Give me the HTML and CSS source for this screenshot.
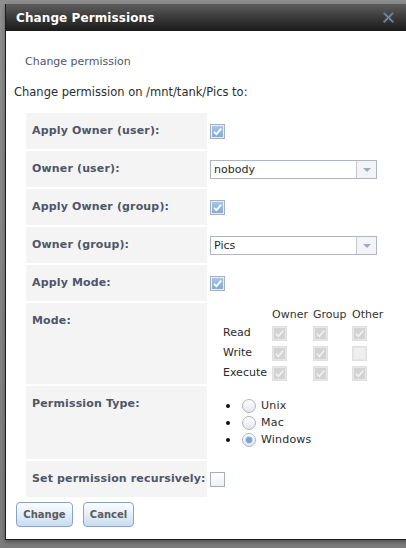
FILE: index.html
```html
<!DOCTYPE html>
<html>
<head>
<meta charset="utf-8">
<title>Change Permissions</title>
<link rel="stylesheet" href="styles.css">
</head>
<body>
<div class="dialog">
  <div class="titlebar">
    <span class="title">Change Permissions</span>
    <svg class="close" width="11" height="11" viewBox="0 0 11 11"><path d="M1.5 1.5 L9.5 9.5 M9.5 1.5 L1.5 9.5" stroke="#5f6f80" stroke-width="2.4" stroke-linecap="square"/><path d="M2 2 L9 9 M9 2 L2 9" stroke="#8797a8" stroke-width="0.9" stroke-linecap="square"/></svg>
  </div>
  <div class="content">
    <div class="tab">Change permission</div>
    <div class="intro">Change permission on /mnt/tank/Pics to:</div>
    <div class="form">
      <div class="label">Apply Owner (user):</div>
      <div class="value"><span class="cb on"><svg width="11" height="11" viewBox="0 0 11 11"><path d="M2 5.8 L4.4 8.2 L9.2 2.6" fill="none" stroke="#fff" stroke-width="1.8"/></svg></span></div>

      <div class="label">Owner (user):</div>
      <div class="value"><div class="select"><span class="sel-text">nobody</span><span class="sel-arrow"></span></div></div>

      <div class="label">Apply Owner (group):</div>
      <div class="value"><span class="cb on"><svg width="11" height="11" viewBox="0 0 11 11"><path d="M2 5.8 L4.4 8.2 L9.2 2.6" fill="none" stroke="#fff" stroke-width="1.8"/></svg></span></div>

      <div class="label">Owner (group):</div>
      <div class="value"><div class="select"><span class="sel-text">Pics</span><span class="sel-arrow"></span></div></div>

      <div class="label">Apply Mode:</div>
      <div class="value"><span class="cb on"><svg width="11" height="11" viewBox="0 0 11 11"><path d="M2 5.8 L4.4 8.2 L9.2 2.6" fill="none" stroke="#fff" stroke-width="1.8"/></svg></span></div>

      <div class="label">Mode:</div>
      <div class="value top">
        <div class="mode">
          <span></span><span class="mh">Owner</span><span class="mh">Group</span><span class="mh">Other</span>
          <span class="ml">Read</span>
          <span class="cell"><span class="cb dis on"><svg width="11" height="11" viewBox="0 0 11 11"><path d="M2 5.8 L4.4 8.2 L9.2 2.6" fill="none" stroke="#f2f2f2" stroke-width="1.6"/></svg></span></span>
          <span class="cell"><span class="cb dis on"><svg width="11" height="11" viewBox="0 0 11 11"><path d="M2 5.8 L4.4 8.2 L9.2 2.6" fill="none" stroke="#f2f2f2" stroke-width="1.6"/></svg></span></span>
          <span class="cell"><span class="cb dis on"><svg width="11" height="11" viewBox="0 0 11 11"><path d="M2 5.8 L4.4 8.2 L9.2 2.6" fill="none" stroke="#f2f2f2" stroke-width="1.6"/></svg></span></span>
          <span class="ml">Write</span>
          <span class="cell"><span class="cb dis on"><svg width="11" height="11" viewBox="0 0 11 11"><path d="M2 5.8 L4.4 8.2 L9.2 2.6" fill="none" stroke="#f2f2f2" stroke-width="1.6"/></svg></span></span>
          <span class="cell"><span class="cb dis on"><svg width="11" height="11" viewBox="0 0 11 11"><path d="M2 5.8 L4.4 8.2 L9.2 2.6" fill="none" stroke="#f2f2f2" stroke-width="1.6"/></svg></span></span>
          <span class="cell"><span class="cb dis off"></span></span>
          <span class="ml">Execute</span>
          <span class="cell"><span class="cb dis on"><svg width="11" height="11" viewBox="0 0 11 11"><path d="M2 5.8 L4.4 8.2 L9.2 2.6" fill="none" stroke="#f2f2f2" stroke-width="1.6"/></svg></span></span>
          <span class="cell"><span class="cb dis on"><svg width="11" height="11" viewBox="0 0 11 11"><path d="M2 5.8 L4.4 8.2 L9.2 2.6" fill="none" stroke="#f2f2f2" stroke-width="1.6"/></svg></span></span>
          <span class="cell"><span class="cb dis on"><svg width="11" height="11" viewBox="0 0 11 11"><path d="M2 5.8 L4.4 8.2 L9.2 2.6" fill="none" stroke="#f2f2f2" stroke-width="1.6"/></svg></span></span>
        </div>
      </div>

      <div class="label">Permission Type:</div>
      <div class="value top">
        <div class="radios">
          <div class="ritem"><span class="dot"></span><span class="radio"></span><span class="rtext">Unix</span></div>
          <div class="ritem"><span class="dot"></span><span class="radio"></span><span class="rtext">Mac</span></div>
          <div class="ritem"><span class="dot"></span><span class="radio checked"><span class="rdot"></span></span><span class="rtext">Windows</span></div>
        </div>
      </div>

      <div class="label">Set permission recursively:</div>
      <div class="value"><span class="cb off"></span></div>
    </div>
    <div class="buttons">
      <button class="btn change">Change</button>
      <button class="btn cancel">Cancel</button>
    </div>
  </div>
</div>
</body>
</html>
```

FILE: styles.css
```css
html, body {
  margin: 0;
  padding: 0;
}
body {
  width: 406px;
  height: 548px;
  overflow: hidden;
  background: linear-gradient(#8e8e8e, #7c7c7c);
  font-family: "DejaVu Sans", Verdana, sans-serif;
}
.dialog {
  margin: 4px 0 0 5px;
  width: 420px;
  height: 535px;
  background: #fff;
  border-left: 1px solid #1e1e1e;
  border-bottom: 1px solid #1e1e1e;
  box-shadow: 0 2px 4px rgba(0,0,0,0.35);
}
.titlebar {
  height: 27px;
  background: linear-gradient(#5e5e5e, #3a3a3a 50%, #1a1a1a);
  display: flex;
  align-items: center;
  position: relative;
}
.title {
  color: #fff;
  font-weight: bold;
  font-size: 12px;
  padding-left: 10px;
  letter-spacing: 0.1px;
}
.close {
  position: absolute;
  left: 377px;
  top: 8px;
}
.content {
  padding-left: 8px;
}
.tab {
  margin-top: 24px;
  margin-left: 11px;
  font-size: 11px;
  line-height: 14px;
  color: #505664;
}
.intro {
  margin-top: 16px;
  font-size: 11.5px;
  line-height: 14px;
  color: #2c2c2c;
}
.form {
  margin-top: 14px;
  margin-left: 12px;
  display: grid;
  grid-template-columns: 181px 1fr;
  grid-template-rows: 36px 36px 36px 36px 36px 81px 73px 36px;
  row-gap: 2px;
}
.label {
  background: #f4f4f4;
  padding: 11px 0 0 6px;
  font-size: 11px;
  line-height: 14px;
  font-weight: bold;
  color: #4f5668;
  white-space: nowrap;
  letter-spacing: 0.15px;
}
.value {
  display: flex;
  align-items: center;
  padding-left: 3px;
}
.value.top {
  align-items: flex-start;
}
.cb {
  box-sizing: border-box;
  display: inline-flex;
  align-items: center;
  justify-content: center;
  width: 15px;
  height: 15px;
  border: 1px solid #a3afc1;
}
.cb.on {
  background: linear-gradient(#a9c9ea, #7fa7d6);
  box-shadow: inset 0 0 0 1px #e8f0fa;
}
.cb.off {
  background: linear-gradient(#ffffff, #edf1f6);
}
.cb.dis {
  border-color: #e0e0e0;
  box-shadow: inset 0 0 0 1px #e6e6e6;
}
.cb.dis.on {
  background: #d3d3d3;
}
.cb.dis.off {
  background: #efefef;
}
.select {
  box-sizing: border-box;
  width: 167px;
  height: 19px;
  border: 1px solid #abb6c8;
  background: #fff;
  display: flex;
  align-items: stretch;
}
.sel-text {
  flex: 1;
  font-size: 11px;
  line-height: 17px;
  padding-left: 3px;
  color: #2a2a2a;
}
.sel-arrow {
  width: 19px;
  border-left: 1px solid #c3cad6;
  background: #f4f4f4;
  position: relative;
}
.sel-arrow::after {
  content: "";
  position: absolute;
  left: 6px;
  top: 7px;
  border-left: 4px solid transparent;
  border-right: 4px solid transparent;
  border-top: 4px solid #9aaccd;
}
.mode {
  margin: 3px 0 0 13px;
  display: grid;
  grid-template-columns: 49px 41px 39px 34px;
  grid-template-rows: 17px 20px 20px 20px;
  font-size: 11px;
  color: #2a2a2a;
}
.mh {
  line-height: 17px;
  color: #333;
}
.ml {
  line-height: 20px;
}
.cell {
  display: flex;
  align-items: center;
}
.radios {
  margin-top: 11px;
  padding-left: 16px;
}
.ritem {
  height: 17px;
  display: flex;
  align-items: center;
  font-size: 11px;
  color: #2a2a2a;
}
.dot {
  width: 4px;
  height: 4px;
  border-radius: 50%;
  background: #111;
}
.radio {
  box-sizing: border-box;
  margin-left: 12px;
  width: 14px;
  height: 14px;
  border-radius: 50%;
  border: 1px solid #aeb5c0;
  background: linear-gradient(#ffffff, #e4e6ea);
  display: flex;
  align-items: center;
  justify-content: center;
}
.rdot {
  width: 6px;
  height: 6px;
  border-radius: 50%;
  background: #7ca3cf;
  box-shadow: 0 0 0 1px #c9dbef;
}
.rtext {
  margin-left: 5px;
  letter-spacing: 0.2px;
}
.buttons {
  margin-top: 5px;
  margin-left: 2px;
  display: flex;
  gap: 10px;
}
.btn {
  box-sizing: border-box;
  height: 25px;
  border: 1px solid #86a5cb;
  border-radius: 4px;
  background: linear-gradient(#fbfdff, #e4eef9 50%, #c8dbf0);
  font-family: "DejaVu Sans", Verdana, sans-serif;
  font-weight: bold;
  font-size: 10px;
  color: #5b5b5b;
  padding: 0;
}
.change {
  width: 57px;
}
.cancel {
  width: 51px;
}
```
